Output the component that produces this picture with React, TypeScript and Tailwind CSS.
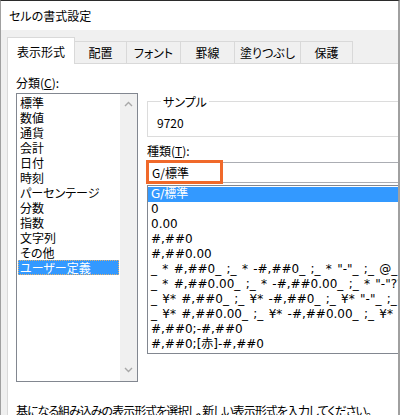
const categories = [
  "標準",
  "数値",
  "通貨",
  "会計",
  "日付",
  "時刻",
  "パーセンテージ",
  "分数",
  "指数",
  "文字列",
  "その他",
  "ユーザー定義",
];

const formats = [
  "G/標準",
  "0",
  "0.00",
  "#,##0",
  "#,##0.00",
  '_ * #,##0_ ;_ * -#,##0_ ;_ * "-"_ ;_ @_ ',
  '_ * #,##0.00_ ;_ * -#,##0.00_ ;_ * "-"??_ ;_ @_ ',
  '_ ¥* #,##0_ ;_ ¥* -#,##0_ ;_ ¥* "-"_ ;_ @_ ',
  '_ ¥* #,##0.00_ ;_ ¥* -#,##0.00_ ;_ ¥* "-"??_ ;_ @_ ',
  "#,##0;-#,##0",
  "#,##0;[赤]-#,##0",
];

const tabs = [
  { label: "配置", w: "w-[52px]" },
  { label: "フォント", w: "w-[54px]" },
  { label: "罫線", w: "w-[54px]" },
  { label: "塗りつぶし", w: "w-[66px]" },
  { label: "保護", w: "w-[52px]" },
];

function Chevron({ down }: { down?: boolean }) {
  return (
    <svg width="9" height="6" viewBox="0 0 9 6" className={down ? "rotate-180" : ""} aria-hidden>
      <polyline points="1,5 4.5,1.5 8,5" fill="none" stroke="#a8a8a8" strokeWidth="1.4" />
    </svg>
  );
}

export default function App() {
  return (
    <div className="flex h-[415px] w-[400px] flex-col overflow-hidden border-t border-l border-r-2 border-t-[#2b2b2b] border-l-[#a0a0a0] border-r-[#a0a0a0] bg-[#f0f0f0] text-[12px] leading-[15px] text-black [font-family:'Noto_Sans_CJK_JP',sans-serif] [font-feature-settings:'palt']">
      <div className="flex h-[29px] shrink-0 items-center bg-white pl-[8px]">セルの書式設定</div>

      <div className="flex flex-1 flex-col pl-[6px] pt-[7px]">
        {/* tabs */}
        <div className="flex h-[26px] shrink-0 items-end">
          <div className="relative z-10 -mb-px flex h-[27px] w-[68px] items-center justify-center border-x border-t border-[#d9d9d9] bg-white">
            表示形式
          </div>
          {tabs.map((t) => (
            <div
              key={t.label}
              className={`flex h-[22px] ${t.w} items-center justify-center border-r border-t border-[#d9d9d9]`}
            >
              {t.label}
            </div>
          ))}
        </div>

        {/* panel */}
        <div className="flex-1 border border-r-0 border-[#d9d9d9] bg-white pl-[8px]">
          <div className="flex gap-[9px]">
            <div className="w-[122px] shrink-0">
              <div className="mt-[11px]">
                分類(<span className="underline">C</span>):
              </div>
              <div className="mt-[3px] flex h-[289px] border border-[#828790]">
                <ul className="flex-1 pt-px">
                  {categories.map((c, i) => (
                    <li
                      key={c}
                      className={
                        i === categories.length - 1
                          ? "mx-px h-[15px] bg-[#3399ff] pl-[2px] text-white outline-1 -outline-offset-1 outline-dotted outline-[#e0b070]"
                          : "h-[15px] pl-[3px]"
                      }
                    >
                      {c}
                    </li>
                  ))}
                </ul>
                <div className="flex w-[17px] flex-col items-center justify-between bg-[#f0f0f0] pb-[8px] pt-[7px]">
                  <Chevron />
                  <Chevron down />
                </div>
              </div>
            </div>

            <div className="w-[320px] shrink-0">
              <fieldset className="mt-[30px] h-[43px] border border-[#dcdcdc] pl-[9px]">
                <legend className="ml-[4px] px-[2px]">サンプル</legend>
                <div className="mt-[6px]">9720</div>
              </fieldset>

              <div className="mt-[6px]">
                種類(<span className="underline">T</span>):
              </div>

              <div className="relative mt-[4px] flex h-[21px] items-center border border-[#abadb3] pl-[4px]">
                G/標準
                <div className="absolute -left-[2px] -top-[3px] h-[24px] w-[77px] border-[3px] border-[#f0692a]" />
              </div>

              <ul className="mt-[2px] h-[169px] overflow-hidden border border-[#828790] pt-px [word-spacing:1.5px] [font-family:'DejaVu_Sans','Noto_Sans_CJK_JP',sans-serif]">
                {formats.map((f, i) => (
                  <li
                    key={f}
                    className={
                      i === 0
                        ? "h-[15px] whitespace-pre bg-[#3399ff] pl-[3px] text-white"
                        : "h-[15px] whitespace-pre pl-[3px]"
                    }
                  >
                    {f}
                  </li>
                ))}
              </ul>
            </div>
          </div>

          <p className="mt-[21px] whitespace-nowrap tracking-[-1px]">
            基になる組み込みの表示形式を選択し、新しい表示形式を入力してください。
          </p>
        </div>
      </div>
    </div>
  );
}
